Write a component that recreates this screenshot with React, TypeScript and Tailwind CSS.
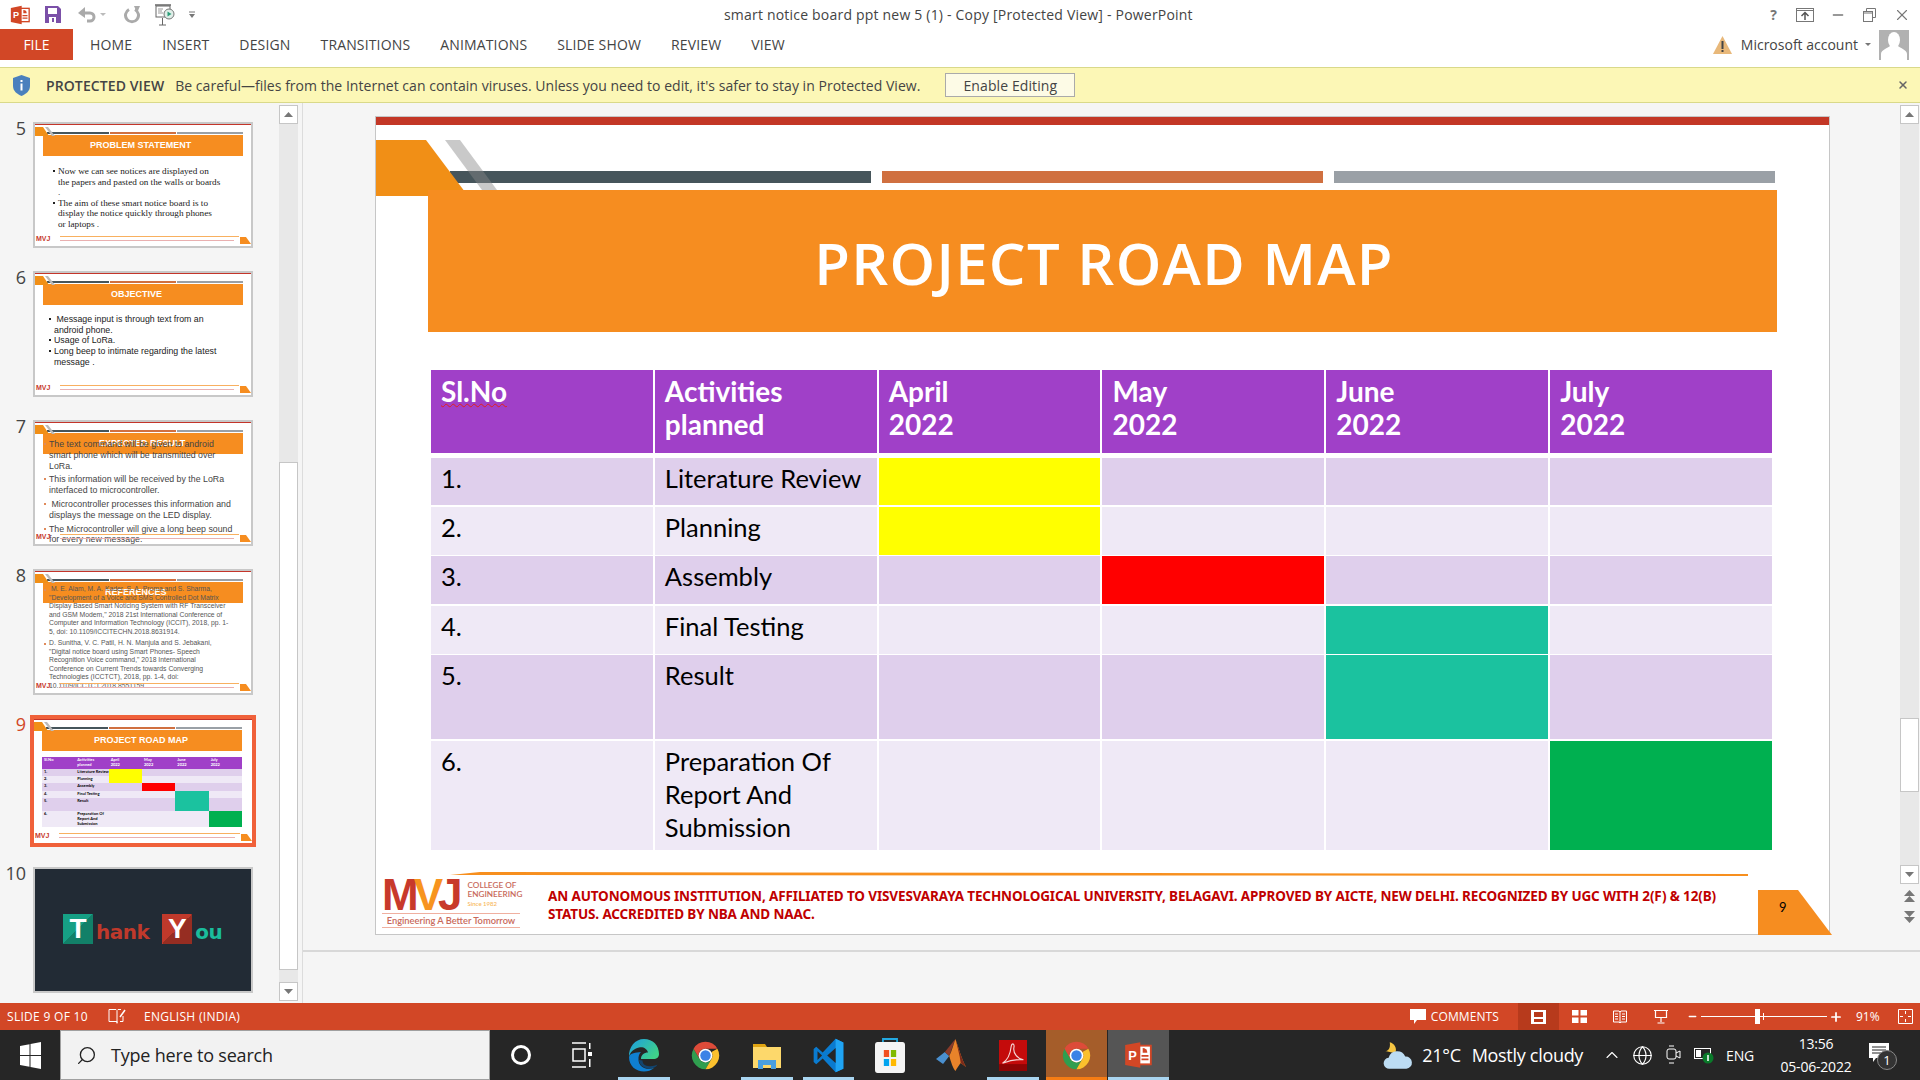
import { ReactNode } from 'react';
import { ChevronUp, Globe, Minus, Plus, Search, X } from 'lucide-react';

const months = ['April', 'May', 'June', 'July'];

const rows = [
  { no: '1.', label: ['Literature Review'], h: 'h-[47px]', fill: ['bg-[#ffff00]', '', '', ''] },
  { no: '2.', label: ['Planning'], h: 'h-[48px]', fill: ['bg-[#ffff00]', '', '', ''] },
  { no: '3.', label: ['Assembly'], h: 'h-[48px]', fill: ['', 'bg-[#ff0000]', '', ''] },
  { no: '4.', label: ['Final Testing'], h: 'h-[48px]', fill: ['', '', 'bg-[#1bc29f]', ''] },
  { no: '5.', label: ['Result'], h: 'h-[84px]', fill: ['', '', 'bg-[#1bc29f]', ''] },
  { no: '6.', label: ['Preparation Of', 'Report And', 'Submission'], h: 'h-[109px]', fill: ['', '', '', 'bg-[#00b050]'] },
];

const tabs = ['HOME', 'INSERT', 'DESIGN', 'TRANSITIONS', 'ANIMATIONS', 'SLIDE SHOW', 'REVIEW', 'VIEW'];

function PptIcon({ size = 22 }: { size?: number }) {
  return (
    <svg width={size} height={size} viewBox="0 0 24 24">
      <rect x="10" y="4" width="13" height="16" fill="#fff" stroke="#d24726" strokeWidth="1.6" />
      <path d="M16 6a4 4 0 0 1 4 4h-4z" fill="#d24726" />
      <path d="M15 12h6v1.4h-6zM15 15h6v1.4h-6z" fill="#d24726" />
      <path d="M1 3.5 14 1v22L1 20.5z" fill="#d24726" />
      <text x="3.6" y="16" fontSize="11" fontWeight="700" fill="#fff" fontFamily="Liberation Sans, sans-serif">P</text>
    </svg>
  );
}

function ChromeIcon() {
  return (
    <svg width="33" height="33" viewBox="0 0 48 48">
      <path d="M6.7 14A20 20 0 0 0 24 44l8.66-15a10 10 0 0 1-17.32 0z" fill="#2f9e4f" />
      <path d="M41.3 14A20 20 0 0 1 24 44l8.66-15a10 10 0 0 0 0-10z" fill="#fbc02d" />
      <path d="M24 4a20 20 0 0 1 17.3 10H24a10 10 0 0 0-8.66 15L6.7 14A20 20 0 0 1 24 4z" fill="#dd4b39" />
      <circle cx="24" cy="24" r="10" fill="#fff" />
      <circle cx="24" cy="24" r="7.6" fill="#3b82e6" />
    </svg>
  );
}

function EdgeIcon() {
  return (
    <svg width="32" height="34" viewBox="0 0 32 34">
      <defs>
        <linearGradient id="edgeA" x1="0" y1="0" x2="1" y2="0.6">
          <stop offset="0" stopColor="#1b9de2" />
          <stop offset="1" stopColor="#3fd18a" />
        </linearGradient>
      </defs>
      <path d="M16 1c9 0 15 6.500 15 15 0 3-2 5-6 5H13c0-4 3-6.500 7-6.500-1-4-5-6-9-5C6 10.500 2 14 1 19 .5 9 7 1 16 1z" fill="url(#edgeA)" />
      <path d="M1 19c0 9 7 14.500 15 14.500 4 0 7-1 10-3.500-8 2.500-15-1-15.500-8-.3-4 1-6.500 2.500-8C8 14.500 2 15 1 19z" fill="#0f7fd1" />
      <path d="M11 22c.5 6 6 9 12 8.500 3-.3 5-1.500 6.500-4-3 1.500-6 2-9.500 1.500-4-.5-5.500-3-5.500-5.500z" fill="#12456f" />
    </svg>
  );
}

function ExplorerIcon() {
  return (
    <svg width="28" height="28" viewBox="0 0 28 28">
      <path d="M0 3h12l2 3h14v21H0z" fill="#e0a412" />
      <rect y="6" width="28" height="21" fill="#fdd86b" />
      <path d="M5 28v-9h18v9h-5v-4h-8v4z" fill="#4a9fe0" />
    </svg>
  );
}

function VsCodeIcon() {
  return (
    <svg width="31" height="35" viewBox="0 0 24 24" preserveAspectRatio="none">
      <path d="M17.500 0.500 23.500 3v18l-6 2.500L7.500 14l-5 4-2-1.500V7.500l2-1.500 5 4z" fill="#0a7bd0" />
      <path d="M17.500 0.500 23.500 3v18l-6 2.500z" fill="#20a4f3" />
      <path d="M17.500 6.800 11 12l6.500 5.200z" fill="#262626" />
      <path d="M3.500 9 7 12l-3.500 3z" fill="#262626" />
    </svg>
  );
}

function StoreIcon() {
  return (
    <svg width="30" height="36" viewBox="0 0 34 36" preserveAspectRatio="none">
      <path d="M9 7V2h16v5" fill="none" stroke="#23a9e1" strokeWidth="2" />
      <rect y="5" width="34" height="31" rx="3" fill="#f4f4f4" />
      <rect x="10" y="13" width="6" height="7" fill="#f25022" />
      <rect x="18" y="13" width="6" height="7" fill="#7fba00" />
      <rect x="10" y="22" width="6" height="7" fill="#00a4ef" />
      <rect x="18" y="22" width="6" height="7" fill="#ffb900" />
    </svg>
  );
}

function MatlabIcon() {
  return (
    <svg width="30" height="34" viewBox="0 0 34 34" preserveAspectRatio="none">
      <path d="M0 21 10 14l5 4-7 8z" fill="#4a90d0" />
      <path d="M10 14 22 1l-7 17z" fill="#8a3b2a" />
      <path d="M22 1c3 7 7 20 12 28l-6-4c-2 2-4 5-6 8-3-3-5-9-7-15 3-5 5-12 7-17z" fill="#e8832a" />
      <path d="M22 1c3 7 7 20 12 28l-6-4C27 17 24 8 22 1z" fill="#7c2a1a" />
    </svg>
  );
}

function AcrobatIcon() {
  return (
    <svg width="28" height="31" viewBox="0 0 32 36" preserveAspectRatio="none">
      <rect width="32" height="36" fill="#c40b0b" />
      <rect y="28" width="32" height="8" fill="#8e0505" />
      <path d="M4 27c5-3 9-11 10-20 1-4 4-3 3 2-1 6 4 13 11 14-8-1-16 1-24 4z" fill="none" stroke="#f5d5d5" strokeWidth="1.300" />
    </svg>
  );
}

function WindowsLogo() {
  return (
    <svg width="21" height="27" viewBox="0 0 21 27">
      <path d="M0 4 9.500 2.200V13H0zM10.500 2 21 0v13H10.500zM0 14h9.500v10.800L0 23zM10.500 14H21v13l-10.500-2z" fill="#fff" />
    </svg>
  );
}

function TaskSlot({ children, line, className = '' }: { children: ReactNode; line?: boolean; className?: string }) {
  return (
    <div className={`relative flex h-full w-[61.500px] items-center justify-center ${className}`}>
      {children}
      {line && <div className="absolute bottom-0 left-[5px] right-[5px] h-[3px] bg-[#a9d5f0]" />}
    </div>
  );
}

function Dot({ orange }: { orange?: boolean }) {
  return (
    <span className={`absolute left-[-5px] top-[4px] h-[2px] w-[2px] ${orange ? 'bg-[#e08a5a]' : 'bg-[#222]'}`} />
  );
}

function Thumb({
  title,
  titleClass,
  children,
  selected,
}: {
  title: string;
  titleClass: string;
  children?: ReactNode;
  selected?: boolean;
}) {
  return (
    <div className={selected ? 'border-[4px] border-[#f0613a] bg-white' : 'border-2 border-[#c8c8c8] bg-white'}>
      <div className={`relative overflow-hidden ${selected ? 'h-[124px] w-[218px]' : 'h-[122px] w-[216px]'}`}>
        <div className="h-px bg-[#c4352a]" />
        <svg className="absolute left-0 top-[3px]" width="24" height="12">
          <polygon points="0,0 8,0 14,9 0,9" fill="#f18f16" />
          <polygon points="10,0 13,0 20,9 17,9" fill="#bbb" />
        </svg>
        <div className="ml-[12px] mt-[7px] flex h-[2px] gap-px">
          <div className="w-[62px] bg-[#46555b]" />
          <div className="w-[66px] bg-[#d07040]" />
          <div className="w-[66px] bg-[#9aa0a6]" />
        </div>
        <div className={`ml-[8px] mt-px flex h-[21px] w-[200px] items-center bg-[#f68d20] font-['Liberation_Sans',sans-serif] text-[9px] font-bold leading-none text-white ${titleClass}`}>
          {title}
        </div>
        {children}
        <div className="absolute bottom-0 left-0 right-0 h-[11px]">
          <div className="absolute left-[1px] top-0 font-['Liberation_Sans',sans-serif] text-[7px] font-bold leading-[8px] text-[#c8392b]">MVJ</div>
          <div className="absolute left-[25px] right-[12px] top-px h-px bg-[#f8b060]" />
          <div className="absolute left-[25px] right-[17px] top-[5px] h-px bg-[#e9b0b0]" />
          <svg className="absolute right-0 top-[2px]" width="11" height="7">
            <polygon points="0,0 6,0 11,7 0,7" fill="#f68d20" />
          </svg>
        </div>
      </div>
    </div>
  );
}

function MiniRoadmap() {
  const heights = ['h-[7px]', 'h-[7px]', 'h-[8px]', 'h-[7px]', 'h-[13px]', 'h-[16px]'];
  return (
    <div className="ml-[8px] mt-[6px] w-[200px] font-['Lato',sans-serif] text-[4px] font-bold leading-[5px] text-black">
      <div className="grid h-[12px] grid-cols-6 bg-[#a040c8] text-white">
        <div className="pl-[2px]">Sl.No</div>
        <div className="pl-[2px]">Activities<br />planned</div>
        {months.map((m) => (
          <div key={m} className="pl-[2px]">{m}<br />2022</div>
        ))}
      </div>
      {rows.map((r, i) => (
        <div key={r.no} className={`grid grid-cols-6 ${heights[i]} ${i % 2 === 0 ? 'bg-[#dfcfec]' : 'bg-[#efe9f6]'}`}>
          <div className="pl-[2px]">{r.no}</div>
          <div className="whitespace-nowrap pl-[2px]">
            {r.label.map((l) => (
              <div key={l}>{l}</div>
            ))}
          </div>
          {r.fill.map((c, j) => (
            <div key={j} className={c} />
          ))}
        </div>
      ))}
    </div>
  );
}

function SlideList() {
  const numClass = "mt-[-5px] w-[26px] text-right font-['Open_Sans',sans-serif] text-[18px] leading-[22px] text-[#444]";
  return (
    <div className="flex w-[279px] flex-col gap-[23px] pt-[19px]">
      <div className="flex">
        <div className={numClass}>5</div>
        <div className="ml-[7px]">
          <Thumb title="PROBLEM STATEMENT" titleClass="pl-[47px]">
            <div className="relative ml-[23px] mt-[10px] font-['Liberation_Serif',serif] text-[9.200px] leading-[10.500px] text-[#222]">
              <div className="relative"><Dot />Now we can see notices are displayed on</div>
              the papers and pasted on the walls or boards<br />
              .
              <div className="relative"><Dot />The aim of these smart notice board is to</div>
              display the notice quickly through phones<br />
              or laptops .
            </div>
          </Thumb>
        </div>
      </div>
      <div className="flex">
        <div className={numClass}>6</div>
        <div className="ml-[7px]">
          <Thumb title="OBJECTIVE" titleClass="pl-[68px]">
            <div className="ml-[19px] mt-[9px] font-['Liberation_Sans',sans-serif] text-[8.800px] leading-[10.700px] text-[#222]">
              <div className="relative"><Dot />&nbsp;Message input is through text from an</div>
              android phone.
              <div className="relative"><Dot />Usage of LoRa.</div>
              <div className="relative"><Dot />Long beep to intimate regarding the latest</div>
              message .
            </div>
          </Thumb>
        </div>
      </div>
      <div className="flex">
        <div className={numClass}>7</div>
        <div className="ml-[7px]">
          <Thumb title="EXPECTED RESULT" titleClass="pl-[56px]">
            <div className="ml-[14px] mt-[-15px] font-['Liberation_Sans',sans-serif] text-[8.800px] leading-[10.800px] text-[#444]">
              <div className="relative"><Dot orange />The text command will be given to android<br />smart phone which will be transmitted over<br />LoRa.</div>
              <div className="relative mt-[3px]"><Dot orange />This information will be received by the LoRa<br />interfaced to microcontroller.</div>
              <div className="relative mt-[3px]"><Dot orange />&nbsp;Microcontroller processes this information and<br />displays the message on the LED display.</div>
              <div className="relative mt-[3px]"><Dot orange />The Microcontroller will give a long beep sound<br />for every new message.</div>
            </div>
          </Thumb>
        </div>
      </div>
      <div className="flex">
        <div className={numClass}>8</div>
        <div className="ml-[7px]">
          <Thumb title="REFERENCES" titleClass="pl-[62px]">
            <div className="ml-[14px] mt-[-18px] font-['Liberation_Sans',sans-serif] text-[6.800px] leading-[8.500px] text-[#555]">
              <div className="relative">
                <Dot orange />
                &nbsp;M. E. Alam, M. A. Kader, S. A. Proma and S. Sharma,<br />
                &quot;Development of a Voice and SMS Controlled Dot Matrix<br />
                Display Based Smart Noticing System with RF Transceiver<br />
                and GSM Modem,&quot; 2018 21st International Conference of<br />
                Computer and Information Technology (ICCIT), 2018, pp. 1-<br />
                5, doi: 10.1109/ICCITECHN.2018.8631914.
              </div>
              <div className="relative mt-[3px]">
                <Dot orange />
                D. Sunitha, V. C. Patil, H. N. Manjula and S. Jebakani,<br />
                &quot;Digital notice board using Smart Phones- Speech<br />
                Recognition Voice command,&quot; 2018 International<br />
                Conference on Current Trends towards Converging<br />
                Technologies (ICCTCT), 2018, pp. 1-4, doi:<br />
                10.1109/ICCTCT.2018.8551159.
              </div>
            </div>
          </Thumb>
        </div>
      </div>
      <div className="flex">
        <div className={`${numClass} !text-[#d24726]`}>9</div>
        <div className="ml-[4px] mb-[-3px] mt-[-3px]">
          <Thumb title="PROJECT ROAD MAP" titleClass="pl-[52px]" selected>
            <MiniRoadmap />
          </Thumb>
        </div>
      </div>
      <div className="flex">
        <div className={numClass}>10</div>
        <div className="ml-[7px] border-2 border-[#c8c8c8]">
          <div className="flex h-[122px] w-[216px] items-center bg-[#222b35] pb-[2px] pl-[28px] font-['DejaVu_Sans',sans-serif] font-bold">
            <div className="flex h-[30px] w-[30px] items-center justify-center bg-[linear-gradient(135deg,#16a085_50%,#128068_50%)] font-['Liberation_Sans',sans-serif] text-[28px] leading-none text-white">T</div>
            <span className="ml-[3px] mt-[6px] text-[20px] leading-none tracking-[-0.5px] text-[#c0392b]">hank</span>
            <div className="ml-[13px] flex h-[30px] w-[30px] items-center justify-center bg-[linear-gradient(135deg,#c0392b_50%,#962d22_50%)] font-['Liberation_Sans',sans-serif] text-[28px] leading-none text-white">Y</div>
            <span className="ml-[3px] mt-[6px] text-[20px] leading-none tracking-[-0.5px] text-[#1abc9c]">ou</span>
          </div>
        </div>
      </div>
    </div>
  );
}

function ScrollArrow({ up }: { up?: boolean }) {
  return (
    <div className="flex h-[19px] w-[19px] items-center justify-center border border-[#c6c6c6] bg-white">
      <svg width="9" height="5" viewBox="0 0 9 5">
        <polygon points={up ? '0,5 9,5 4.5,0' : '0,0 9,0 4.5,5'} fill="#777" />
      </svg>
    </div>
  );
}

function Slide() {
  return (
    <div className="relative ml-[72px] mt-[13px] h-[819px] w-[1455px] border border-[#c6c6c6] bg-white">
      <div className="h-[8px] bg-[#c33726]" />
      <svg className="absolute left-0 top-[23px]" width="125" height="60">
        <polygon points="0,0 50,0 92,56 0,56" fill="#f18f16" />
        <polygon points="69,0 84,0 121,50 106,50" fill="#888" fillOpacity="0.45" />
      </svg>
      <div className="ml-[74px] mt-[46px] flex h-[12px] gap-[11px]">
        <div className="w-[421px] bg-[#46555b]" />
        <div className="w-[441px] bg-[#d07040]" />
        <div className="w-[441px] bg-[#9aa0a6]" />
      </div>
      <div className="relative ml-[52px] mt-[7px] flex h-[142px] w-[1349px] items-center justify-center bg-[#f68d20] pt-[2px] font-['Open_Sans',sans-serif] text-[58px] font-semibold tracking-[1.300px] text-white">
        <span className="ml-[3px]">PROJECT ROAD MAP</span>
      </div>

      <div className="ml-[55px] mt-[38px] w-[1341px] font-['Lato',sans-serif] text-[25.500px] text-black">
        <div className="mb-[5px] grid h-[83px] grid-cols-6 gap-x-[2px] text-[28px] font-bold leading-[33px] text-white">
          <div className="bg-[#a040c8] px-[10px] pt-[5px]">
            <span className="underline decoration-[#e02020] decoration-wavy decoration-1">Sl.No</span>
          </div>
          <div className="bg-[#a040c8] px-[10px] pt-[5px]">Activities<br />planned</div>
          {months.map((m) => (
            <div key={m} className="bg-[#a040c8] px-[10px] pt-[5px]">{m}<br />2022</div>
          ))}
        </div>
        <div className="flex flex-col gap-[1.500px]">
          {rows.map((r, i) => {
            const base = i % 2 === 0 ? 'bg-[#dfcfec]' : 'bg-[#efe9f6]';
            return (
              <div key={r.no} className={`grid grid-cols-6 gap-x-[2px] ${r.h} leading-[33px]`}>
                <div className={`${base} px-[10px] pt-[4px]`}>{r.no}</div>
                <div className={`${base} whitespace-nowrap px-[10px] pt-[4px]`}>
                  {r.label.map((l) => (
                    <div key={l}>{l}</div>
                  ))}
                </div>
                {r.fill.map((c, j) => (
                  <div key={j} className={c || base} />
                ))}
              </div>
            );
          })}
        </div>
      </div>

      <div className="absolute bottom-0 left-0 right-0 h-[63px]">
        <svg className="absolute left-[74px] top-0" width="1300" height="6">
          <polygon points="0,4 30,1 1298,3 1298,5 30,4" fill="#f78f1e" />
        </svg>
        <div className="flex h-full items-start">
          <div className="ml-[6px] mt-[5px] w-[138px]">
            <div className="flex h-[37px] items-center">
              <div className="flex items-baseline font-['Liberation_Sans',sans-serif] text-[44px] font-bold leading-none tracking-[-5px]">
                <span className="text-[#c8392b]">M</span>
                <span className="text-[#f7941e]">V</span>
                <span className="text-[#c8392b]">J</span>
              </div>
              <div className="ml-[10px] whitespace-nowrap font-['Lato',sans-serif] text-[8.200px] font-semibold leading-[9px] text-[#c8695a]">
                COLLEGE OF<br />ENGINEERING<br />
                <span className="text-[6px] text-[#f8b860]">Since 1982</span>
              </div>
            </div>
            <div className="border-y border-[#f0b0a0] text-center font-['Lato',sans-serif] text-[9.300px] font-semibold leading-[13px] text-[#c8695a]">
              Engineering A Better Tomorrow
            </div>
          </div>
          <div className="ml-[28px] mt-[16px] whitespace-nowrap font-['Noto_Sans',sans-serif] text-[13.500px] font-bold leading-[18px] tracking-[-0.13px] text-[#c00000]">
            AN AUTONOMOUS INSTITUTION, AFFILIATED TO VISVESVARAYA TECHNOLOGICAL UNIVERSITY, BELAGAVI. APPROVED BY AICTE, NEW DELHI. RECOGNIZED BY UGC WITH 2(F) &amp; 12(B)<br />
            STATUS. ACCREDITED BY NBA AND NAAC.
          </div>
        </div>
        <div className="absolute bottom-[-1px] right-[-3px] h-[45px] w-[74px]">
          <svg className="absolute inset-0" width="74" height="45">
            <polygon points="0,0 40,0 74,45 0,45" fill="#f68d20" />
          </svg>
          <span className="absolute left-[21px] top-[11px] font-['Lato',sans-serif] text-[13px] leading-none text-black">9</span>
        </div>
      </div>
    </div>
  );
}

export default function App() {
  return (
    <div className="flex h-screen w-screen flex-col overflow-hidden bg-white font-['Open_Sans',sans-serif] text-[#444]">
      {/* title bar */}
      <div className="flex h-[29px] items-center">
        <div className="ml-[10px] flex items-center">
          <PptIcon size={20} />
          <svg className="ml-[15px]" width="16" height="17" viewBox="0 0 16 17">
            <path d="M0 0h13l3 3v14H0z" fill="#7b50a8" />
            <rect x="3" y="2" width="9" height="6" fill="#fff" />
            <rect x="4" y="11" width="7" height="6" fill="#fff" />
            <rect x="7" y="12" width="2" height="4" fill="#7b50a8" />
          </svg>
          <svg className="ml-[17px]" width="18" height="17" viewBox="0 0 18 17">
            <path d="M5 7h7a4 4 0 0 1 0 8H9" fill="none" stroke="#aaa" strokeWidth="3" />
            <polygon points="0,7 7,1 7,12" fill="#aaa" />
          </svg>
          <svg className="ml-[4px]" width="6" height="3">
            <polygon points="0,0 6,0 3,3" fill="#bbb" />
          </svg>
          <svg className="ml-[17px]" width="17" height="18" viewBox="0 0 17 18">
            <path d="M6 3.500a6.500 6.500 0 1 0 6 0" fill="none" stroke="#aaa" strokeWidth="3" />
            <polygon points="11,0 17,0 14,7" fill="#aaa" />
          </svg>
          <svg className="ml-[15px]" width="20" height="22" viewBox="0 0 20 22">
            <rect x="1" y="2" width="14" height="11" fill="#fff" stroke="#666" />
            <path d="M0 1h16" stroke="#666" strokeWidth="1.500" />
            <path d="M3 5h5M3 7h4M3 9h5" stroke="#999" />
            <circle cx="14" cy="10" r="5" fill="#dfeee8" stroke="#777" />
            <polygon points="12.500,7.500 12.500,12.500 16.500,10" fill="#2a9d78" />
            <path d="M4 21h7M7.500 14v7" stroke="#666" />
          </svg>
          <svg className="ml-[14px]" width="6" height="7">
            <path d="M0 1h6" stroke="#777" />
            <polygon points="0,3 6,3 3,7" fill="#777" />
          </svg>
        </div>
        <div className="ml-[529px] whitespace-nowrap text-[14px] tracking-[0.2px] text-[#444]">
          smart notice board ppt new 5 (1) - Copy [Protected View] - PowerPoint
        </div>
        <div className="ml-auto flex items-center pr-[9px] text-[#777]">
          <span className="text-[14px] font-bold">?</span>
          <svg className="ml-[19px]" width="18" height="14" viewBox="0 0 18 14">
            <rect x=".5" y=".5" width="17" height="13" fill="none" stroke="#777" />
            <path d="M1 2.500h16" stroke="#777" />
            <path d="M9 12V5M5.500 8 9 4.500 12.500 8" fill="none" stroke="#555" strokeWidth="1.500" />
          </svg>
          <Minus className="ml-[16px]" size={16} strokeWidth={2} />
          <svg className="ml-[17px]" width="13" height="14" viewBox="0 0 13 14">
            <path d="M3.500 3.500V.5h9v9h-3" fill="none" stroke="#777" />
            <rect x=".5" y="3.500" width="9" height="10" fill="none" stroke="#777" />
            <path d="M1 5h8" stroke="#777" />
          </svg>
          <X className="ml-[17px]" size={18} strokeWidth={1.500} />
        </div>
      </div>

      {/* ribbon tabs */}
      <div className="flex h-[31px] items-center">
        <div className="flex h-full w-[73px] items-center justify-center bg-[#d24726] text-[14px] text-white">FILE</div>
        <div className="ml-[2px] flex text-[14px] tracking-[0.15px] text-[#444]">
          {tabs.map((t) => (
            <div key={t} className="whitespace-nowrap px-[15px]">{t}</div>
          ))}
        </div>
        <div className="ml-auto flex items-center pr-[11px]">
          <svg width="19" height="18" viewBox="0 0 19 18">
            <polygon points="9.500,0 19,18 0,18" fill="#e8b87a" />
            <rect x="8.500" y="5" width="2" height="8" fill="#444" />
            <rect x="8.500" y="14" width="2" height="2" fill="#444" />
          </svg>
          <span className="ml-[9px] whitespace-nowrap text-[14px]">Microsoft account</span>
          <svg className="ml-[7px]" width="6" height="3">
            <polygon points="0,0 6,0 3,3" fill="#777" />
          </svg>
          <svg className="ml-[8px]" width="30" height="30" viewBox="0 0 30 30">
            <rect width="30" height="30" fill="#b1b1b1" />
            <ellipse cx="15" cy="10" rx="6" ry="8" fill="#fff" />
            <path d="M2 30v-6c0-4 7-6 9-8h8c2 2 9 4 9 8v6z" fill="#fff" />
          </svg>
        </div>
      </div>

      <div className="h-[7px]" />

      {/* protected view bar */}
      <div className="flex h-[36px] items-center border-y border-[#d9d98a] bg-[#fcf7b6] text-[14px] text-[#444]">
        <svg className="ml-[13px]" width="17" height="21" viewBox="0 0 17 21">
          <path d="M8.500 0 17 3v8c0 5-4 8-8.500 10C4 19 0 16 0 11V3z" fill="#4a80bd" />
          <rect x="7.500" y="5" width="2" height="2" fill="#fff" />
          <rect x="7.500" y="8.500" width="2" height="7" fill="#fff" />
        </svg>
        <span className="ml-[16px] whitespace-nowrap font-semibold tracking-[0.1px]">PROTECTED VIEW</span>
        <span className="ml-[11px] whitespace-nowrap tracking-[0.03px]">
          Be careful—files from the Internet can contain viruses. Unless you need to edit, it&apos;s safer to stay in Protected View.
        </span>
        <div className="ml-[25px] flex h-[24px] w-[130px] items-center justify-center border border-[#aaa] bg-[#fdfbe6] tracking-[0.1px]">
          Enable Editing
        </div>
        <X className="ml-auto mr-[11px] text-[#666]" size={12} strokeWidth={3} />
      </div>

      {/* main */}
      <div className="flex h-[900px] bg-[#f5f5f5]">
        <div className="flex h-full w-[303px] shrink-0 border-r border-[#dcdcdc]">
          <SlideList />
          <div className="mt-[2px] flex h-[896px] w-[19px] flex-col bg-[#e8e8e8]">
            <ScrollArrow up />
            <div className="mt-[338px] h-[508px] border border-[#c6c6c6] bg-white" />
            <div className="flex-1" />
            <ScrollArrow />
          </div>
        </div>
        <div className="flex flex-1 flex-col">
          <div className="flex h-[849px] justify-between border-b-2 border-[#d8d8d8]">
            <Slide />
            <div className="mr-[1px] mt-[2px] flex w-[19px] flex-col items-center">
              <div className="flex h-[779px] w-[19px] flex-col bg-[#e8e8e8]">
                <ScrollArrow up />
                <div className="mt-[594px] h-[74px] border border-[#c6c6c6] bg-white" />
                <div className="flex-1" />
                <ScrollArrow />
              </div>
              <svg className="mt-[6px]" width="11" height="13" viewBox="0 0 11 13">
                <path d="M5.500 0 11 6H0zM5.500 6 11 12H0z" fill="#777" />
              </svg>
              <svg className="mt-[8px]" width="11" height="13" viewBox="0 0 11 13">
                <path d="M0 0h11L5.500 6zM0 6h11L5.500 12z" fill="#777" />
              </svg>
            </div>
          </div>
        </div>
      </div>

      {/* status bar */}
      <div className="flex h-[27px] items-center bg-[#d24726] text-[12px] text-white">
        <span className="ml-[7px] whitespace-nowrap tracking-[0.3px]">SLIDE 9 OF 10</span>
        <svg className="ml-[20px]" width="18" height="17" viewBox="0 0 18 17">
          <path d="M1 1.500h7l1 1 1-1h3M1 1.500v12h8v2M9 3v12M12 13.500h3V8" fill="none" stroke="#fff" />
          <path d="M12 9 17 2" stroke="#fff" strokeWidth="1.500" />
        </svg>
        <span className="ml-[18px] whitespace-nowrap tracking-[0.3px]">ENGLISH (INDIA)</span>
        <div className="ml-auto flex h-full items-center">
          <svg width="16" height="16" viewBox="0 0 16 16">
            <path d="M0 0h16v11H7l-3 4v-4H0z" fill="#fff" />
          </svg>
          <span className="ml-[5px] whitespace-nowrap tracking-[0.1px]">COMMENTS</span>
          <div className="ml-[19px] flex h-full w-[41px] items-center justify-center bg-[#b73a1c]">
            <svg width="15" height="14" viewBox="0 0 15 14">
              <path d="M0 0h15v14H0zM3 2v5h9V2zM3 9v3h9V9z" fill="#fff" fillRule="evenodd" />
            </svg>
          </div>
          <svg className="ml-[13px]" width="15" height="13" viewBox="0 0 15 13">
            <path d="M0 0h6.500v5.500H0zM8.500 0H15v5.500H8.500zM0 7.500h6.500V13H0zM8.500 7.500H15V13H8.500z" fill="#fff" />
          </svg>
          <svg className="ml-[26px]" width="14" height="14" viewBox="0 0 14 14">
            <path d="M.5 1h5.500l1 1 1-1h5.500v11H8l-1 1-1-1H.5zM7 2v10M2 4h3M2 6.500h3M2 9h3M9 4h3M9 6.500h3M9 9h3" fill="none" stroke="#fff" />
          </svg>
          <svg className="ml-[27px]" width="14" height="14" viewBox="0 0 14 14">
            <path d="M0 .5h14M1.500 1v6.500h11V1M7 7.500V12M3.500 13h7" fill="none" stroke="#fff" strokeWidth="1.200" />
          </svg>
          <Minus className="ml-[19px]" size={11} strokeWidth={3} />
          <div className="relative ml-[3px] h-px w-[126px] bg-white">
            <div className="absolute left-[54px] top-[-7px] h-[15px] w-[5px] bg-white" />
            <div className="absolute left-[62px] top-[-3px] h-[7px] w-px bg-white" />
          </div>
          <Plus className="ml-[2px]" size={14} strokeWidth={3} />
          <span className="ml-[13px] w-[26px] whitespace-nowrap">91%</span>
          <svg className="ml-[16px] mr-[7px]" width="15" height="15" viewBox="0 0 15 15">
            <path d="M.5.5h14v14H.5zM7.500 2v3M7.500 10v3M2 7.500h3M10 7.500h3" fill="none" stroke="#fff" />
          </svg>
        </div>
      </div>

      {/* taskbar */}
      <div className="flex h-[50px] items-center bg-[#262626] text-white">
        <div className="flex w-[60px] justify-center">
          <WindowsLogo />
        </div>
        <div className="flex h-full w-[430px] items-center border border-[#a0a0a0] bg-[#f2f2f2] text-[#222]">
          <Search className="ml-[15px] -scale-x-100" size={21} strokeWidth={1.500} />
          <span className="ml-[14px] whitespace-nowrap text-[18px] tracking-[-0.2px]">Type here to search</span>
        </div>
        <TaskSlot>
          <div className="h-[20px] w-[20px] rounded-full border-[3px] border-white" />
        </TaskSlot>
        <TaskSlot>
          <svg width="20" height="26" viewBox="0 0 20 26">
            <path d="M0 1h14M0 25h14M1 7h12v12H1z" fill="none" stroke="#fff" strokeWidth="1.500" />
            <rect x="17" y="1" width="1.500" height="6" fill="#fff" />
            <rect x="16" y="10" width="4" height="4" fill="#fff" />
            <rect x="17" y="17" width="1.500" height="8" fill="#fff" />
          </svg>
        </TaskSlot>
        <TaskSlot line><EdgeIcon /></TaskSlot>
        <TaskSlot><ChromeIcon /></TaskSlot>
        <TaskSlot line><ExplorerIcon /></TaskSlot>
        <TaskSlot line><VsCodeIcon /></TaskSlot>
        <TaskSlot><StoreIcon /></TaskSlot>
        <TaskSlot><MatlabIcon /></TaskSlot>
        <TaskSlot line><AcrobatIcon /></TaskSlot>
        <div className="relative ml-[2px] flex h-full w-[61px] items-center justify-center bg-[#a55d2a]">
          <ChromeIcon />
          <div className="absolute bottom-0 left-0 right-0 h-[3px] bg-[#f57c14]" />
        </div>
        <div className="relative ml-px flex h-full w-[61px] items-center justify-center bg-[#555]">
          <PptIcon size={28} />
          <div className="absolute bottom-0 left-0 right-0 h-[3px] bg-[#a9d5f0]" />
        </div>
        <div className="ml-auto flex h-full items-center pr-[5px]">
          <svg width="31" height="31" viewBox="0 0 28 28">
            <path d="M3 10c2 0 5-2 4-8 4 1 7 5 5 10z" fill="#f5c542" />
            <path d="M7 26a5 5 0 0 1-1-10 8 8 0 0 1 15-1 5.500 5.500 0 0 1 1 11z" fill="#bcdcf3" />
          </svg>
          <span className="ml-[9px] whitespace-nowrap text-[18px] tracking-[-0.3px]">21°C</span>
          <span className="ml-[11px] whitespace-nowrap text-[18px] tracking-[-0.3px]">Mostly cloudy</span>
          <ChevronUp className="ml-[19px]" size={20} strokeWidth={1.300} />
          <Globe className="ml-[10px]" size={21} strokeWidth={1.300} />
          <svg className="ml-[13px]" width="15" height="20" viewBox="0 0 15 20">
            <rect x="1" y="4" width="9" height="10" rx="2" fill="none" stroke="#fff" />
            <path d="M10 8l4-2v7l-4-2M3 1h5M3 18h5" fill="none" stroke="#fff" />
          </svg>
          <svg className="ml-[13px]" width="20" height="18" viewBox="0 0 20 18">
            <rect x=".5" y="2.500" width="16" height="10" fill="none" stroke="#fff" />
            <rect x="2" y="4" width="5" height="7" fill="#fff" />
            <circle cx="14" cy="12" r="5.500" fill="#0a7a2a" />
            <path d="M14 9v6" stroke="#fff" strokeWidth="1.500" />
          </svg>
          <span className="ml-[12px] whitespace-nowrap text-[14px] tracking-[-0.2px]">ENG</span>
          <div className="ml-[24px] flex w-[76px] flex-col items-center whitespace-nowrap text-[14px] leading-[23px] tracking-[-0.2px]">
            <span>13:56</span>
            <span>05-06-2022</span>
          </div>
          <div className="relative ml-[15px] mr-[26px] h-[24px] w-[20px]">
            <svg width="20" height="20" viewBox="0 0 20 20">
              <path d="M0 0h20v15H7l-3 4v-4H0z" fill="#fff" />
              <path d="M3 4h14M3 7h14M3 10h10" stroke="#262626" />
            </svg>
            <div className="absolute bottom-[-3px] right-[-8px] flex h-[20px] w-[20px] items-center justify-center rounded-full border border-[#888] bg-[#333] text-[13px] leading-none">
              1
            </div>
          </div>
        </div>
      </div>
    </div>
  );
}
